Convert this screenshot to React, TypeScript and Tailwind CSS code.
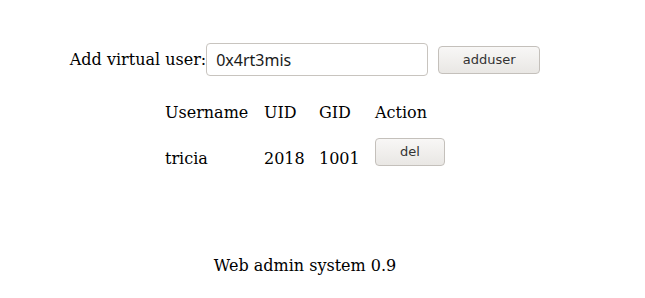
export default function App() {
  return (
    <div className="w-[610px] flex flex-col items-center pt-[43px] font-['DejaVu_Serif',serif] text-[16px] text-black bg-white h-[298px]">
      <div className="flex items-center">
        <span>Add virtual user:</span>
        <input
          defaultValue="0x4rt3mis"
          className="w-[222px] h-[33px] border border-[#c8c4bf] rounded-[4px] pl-[9px] pr-[9px] font-['Noto_Sans',sans-serif] text-[16px] text-[#1a1a1a] outline-none"
        />
        <button className="ml-[10px] w-[102px] h-[28px] border border-[#c4c0bb] rounded-[4px] bg-gradient-to-b from-[#f8f7f6] to-[#e9e7e4] font-['DejaVu_Sans',sans-serif] text-[13px] text-[#333]">
          adduser
        </button>
      </div>
      <table className="mt-[21px] border-separate border-spacing-0">
        <tbody>
          <tr className="h-[32px]">
            <td className="w-[99px] align-middle">Username</td>
            <td className="w-[55px]">UID</td>
            <td className="w-[56px]">GID</td>
            <td>Action</td>
          </tr>
          <tr className="h-[60px]">
            <td>tricia</td>
            <td>2018</td>
            <td>1001</td>
            <td>
              <button className="w-[70px] h-[28px] border border-[#c4c0bb] rounded-[4px] bg-gradient-to-b from-[#f8f7f6] to-[#e9e7e4] font-['DejaVu_Sans',sans-serif] text-[13px] text-[#333] -translate-y-[7px]">
                del
              </button>
            </td>
          </tr>
        </tbody>
      </table>
      <div className="mt-[65px]">Web admin system 0.9</div>
    </div>
  );
}
